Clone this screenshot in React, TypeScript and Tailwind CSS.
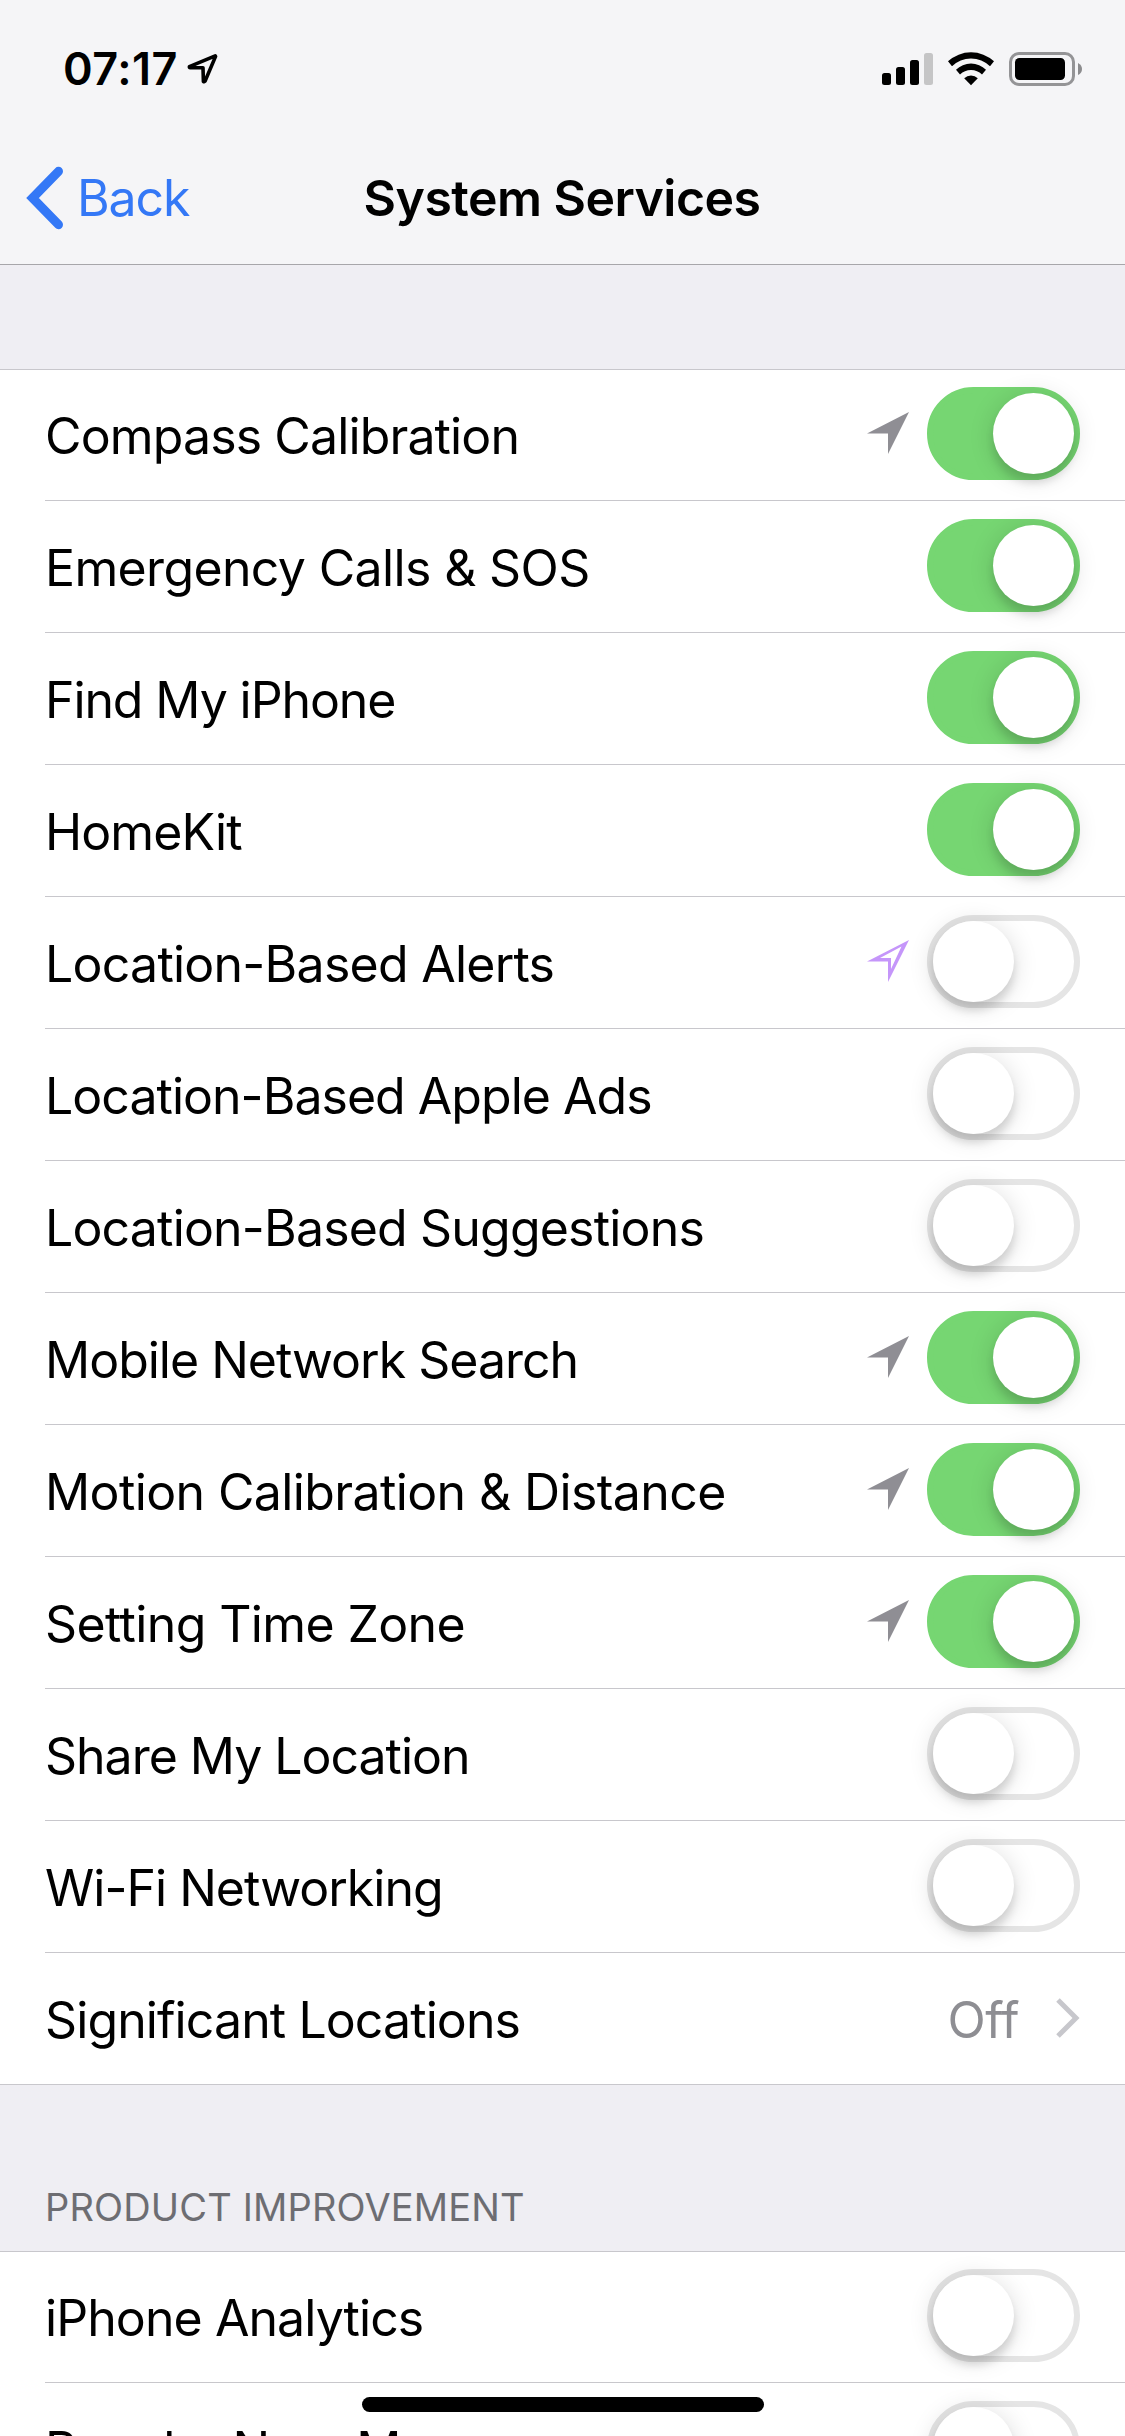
import React from 'react';

type LocationUse = 'recent' | 'geofence';

interface ServiceRow {
  label: string;
  labelClass: string;
  enabled?: boolean;
  value?: string;
  usage?: LocationUse;
}

const services: ServiceRow[] = [
  { label: 'Compass Calibration', labelClass: 'tracking-[-0.87px]', enabled: true, usage: 'recent' },
  { label: 'Emergency Calls & SOS', labelClass: 'tracking-[-0.64px]', enabled: true },
  { label: 'Find My iPhone', labelClass: 'tracking-[-1.1px]', enabled: true },
  { label: 'HomeKit', labelClass: 'tracking-[-0.9px]', enabled: true },
  { label: 'Location-Based Alerts', labelClass: 'tracking-[-0.75px]', enabled: false, usage: 'geofence' },
  { label: 'Location-Based Apple Ads', labelClass: 'tracking-[-0.97px]', enabled: false },
  { label: 'Location-Based Suggestions', labelClass: 'tracking-[-0.82px]', enabled: false },
  { label: 'Mobile Network Search', labelClass: 'tracking-[-1px]', enabled: true, usage: 'recent' },
  { label: 'Motion Calibration & Distance', labelClass: 'tracking-[-0.61px]', enabled: true, usage: 'recent' },
  { label: 'Setting Time Zone', labelClass: 'tracking-[-0.62px]', enabled: true, usage: 'recent' },
  { label: 'Share My Location', labelClass: 'tracking-[-1.02px]', enabled: false },
  { label: 'Wi-Fi Networking', labelClass: 'tracking-[-0.98px]', enabled: false },
  { label: 'Significant Locations', labelClass: 'tracking-[-0.9px]', value: 'Off' },
];

const improvements: ServiceRow[] = [
  { label: 'iPhone Analytics', labelClass: 'tracking-[-0.92px]', enabled: false },
  { label: 'Popular Near Me', labelClass: 'tracking-[-0.92px]', enabled: false },
];

function StatusBar() {
  return (
    <div className="flex h-[132px] items-start justify-between pl-[63px] pr-[43px] pt-[52px]">
      <div className="flex items-start">
        <span className="w-[124px] whitespace-nowrap text-[45px] font-semibold leading-[34px] tracking-[0.5px]">07:17</span>
        <svg className="mt-[1px]" width="31" height="32" viewBox="0 0 31 32" fill="none" stroke="#000" strokeWidth="3.6" strokeLinejoin="round">
          <path d="M28.2 2.8 L2.4 13.6 Q2.2 14.8 3.2 14.8 H16 L16.4 28.4 Q17.2 29.2 18 28.2 L28.6 3.4 Z" />
        </svg>
      </div>
      <svg width="201" height="36" viewBox="0 0 201 36">
        <rect x="1" y="21" width="9" height="12" rx="2.5" />
        <rect x="15" y="15" width="9" height="18" rx="2.5" />
        <rect x="29" y="8" width="9" height="25" rx="2.5" />
        <rect x="43" y="1" width="9" height="32" rx="2.5" fill="#c5c5c6" />
        <path d="M67 9.3 A34 34 0 0 1 113 9.3 L109 14.2 A27 27 0 0 0 71 14.2 Z" />
        <path d="M75 17.8 A21 21 0 0 1 105 17.8 L101 22.6 A15.5 15.5 0 0 0 79 22.6 Z" />
        <path d="M83.2 26.2 A10 10 0 0 1 96.8 26.2 L90 33.2 Z" />
        <rect x="129.5" y="1.5" width="63" height="31" rx="8.5" fill="none" stroke="#949496" strokeWidth="3" />
        <rect x="134" y="6" width="50" height="22" rx="4.5" />
        <path d="M197 11 Q201 13 201 17 Q201 21 197 23 Z" fill="#8c8c8e" />
      </svg>
    </div>
  );
}

function NavBar() {
  return (
    <div className="grid h-[132px] grid-cols-[1fr_auto_1fr] items-center pl-[26px]">
      <button className="flex items-center text-left text-[#3478f6]">
        <svg width="39" height="66" viewBox="0 0 39 66" fill="none" stroke="#3478f6" strokeWidth="9" strokeLinecap="round" strokeLinejoin="miter">
          <path d="M32.5 6.3 L6.5 33 L32.5 59.7" />
        </svg>
        <span className="ml-[12px] text-[50px] leading-[60px] tracking-[-1.1px]">Back</span>
      </button>
      <h1 className="-ml-[27px] text-[50px] font-semibold leading-[60px] tracking-[-0.55px]">System Services</h1>
    </div>
  );
}

function LocationArrow({ usage }: { usage: LocationUse }) {
  if (usage === 'geofence') {
    return (
      <svg width="42" height="42" viewBox="0 0 42 42" fill="#c596fa" fillRule="evenodd">
        <path d="M42 0 L21 42 V21.5 H0 Z M34.5 6.5 L13 18 H24 V29 Z" />
      </svg>
    );
  }
  return (
    <svg width="42" height="42" viewBox="0 0 42 42" fill="#8f8e94">
      <path d="M42 0 L21 42 V21.5 H0 Z" />
    </svg>
  );
}

function Toggle({ enabled }: { enabled: boolean }) {
  return (
    <span
      role="switch"
      aria-checked={enabled}
      className={`-mt-[2px] flex h-[93px] w-[153px] rounded-full border-[6px] ${
        enabled ? 'justify-end border-[#76d672] bg-[#76d672]' : 'justify-start border-[#e5e5e5] bg-white'
      }`}
    >
      <span className="size-[81px] rounded-full bg-white shadow-[0_9px_9px_rgba(0,0,0,0.12),0_3px_26px_rgba(0,0,0,0.14)]" />
    </span>
  );
}

function Row({ row, last }: { row: ServiceRow; last: boolean }) {
  return (
    <li className={last ? 'border-b border-[#c8c7cc] pl-[45px]' : 'pl-[45px]'}>
      <div className={`flex items-center pr-[45px] ${last ? 'h-[131px]' : 'h-[132px] border-b border-[#c8c7cc]'}`}>
        <span className={`mt-[3px] grow whitespace-nowrap text-[50px] leading-[60px] ${row.labelClass}`}>
          {row.label}
        </span>
        {row.usage && (
          <span className="-mt-[3px] mr-[18px]">
            <LocationArrow usage={row.usage} />
          </span>
        )}
        {row.enabled !== undefined && <Toggle enabled={row.enabled} />}
        {row.value && (
          <>
            {/* contextual forms would join the double f */}
            <span className="mt-[3px] text-[50px] leading-[60px] tracking-[-0.6px] text-[#8e8e93] [font-feature-settings:'calt'_0,'liga'_0,'clig'_0,'dlig'_0]">
              {row.value}
            </span>
            <svg className="-mt-[2px] ml-[36px]" width="25" height="40" viewBox="0 0 25 40" fill="none" stroke="#c7c7cc" strokeWidth="5">
              <path d="M3 2 L21 20 L3 38" />
            </svg>
          </>
        )}
      </div>
    </li>
  );
}

function RowGroup({ rows, open = false }: { rows: ServiceRow[]; open?: boolean }) {
  return (
    <ul className="bg-white shadow-[inset_0_1px_0_#c8c7cc]">
      {rows.map((row, index) => (
        <Row key={row.label} row={row} last={!open && index === rows.length - 1} />
      ))}
    </ul>
  );
}

export default function App() {
  return (
    <div className="relative h-[2436px] w-[1125px] overflow-hidden bg-[#efeef3] font-[Inter,'Liberation_Sans',sans-serif] text-black">
      <header className="h-[265px] border-b border-[#a7a6aa] bg-[#f5f5f7]">
        <StatusBar />
        <NavBar />
      </header>

      <main className="pt-[104px]">
        <RowGroup rows={services} />
        <h2 className="flex h-[166px] items-end pb-[21px] pl-[45px] text-[38px] leading-[46px] tracking-[0.15px] text-[#6d6d72]">
          PRODUCT IMPROVEMENT
        </h2>
        <RowGroup rows={improvements} open />
      </main>

      {/* home indicator */}
      <div className="absolute bottom-[24px] left-[362px] h-[15px] w-[402px] rounded-full bg-black" />
    </div>
  );
}
